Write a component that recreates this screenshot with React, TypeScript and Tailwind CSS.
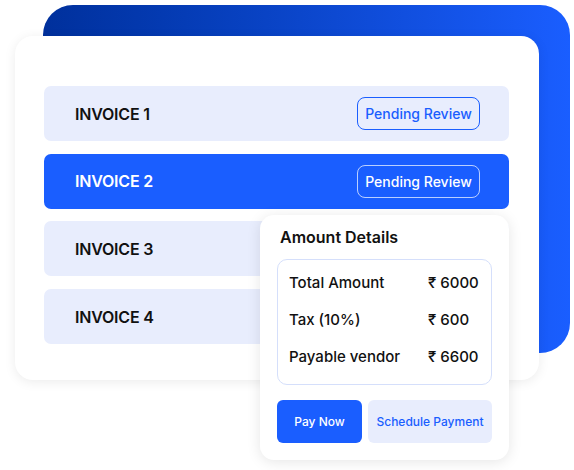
const invoices = ['INVOICE 1', 'INVOICE 2', 'INVOICE 3', 'INVOICE 4']

const amounts = [
  { label: 'Total Amount', value: '₹ 6000' },
  { label: 'Tax (10%)', value: '₹ 600' },
  { label: 'Payable vendor', value: '₹ 6600' },
]

export default function App() {
  return (
    <div className="relative w-[574px] h-[470px] bg-white overflow-hidden font-['Inter',sans-serif]">
      {/* Back card */}
      <div className="absolute left-[43px] top-[5px] w-[527px] h-[348px] rounded-[30px] bg-gradient-to-r from-[#00309c] to-[#1a5eff]" />

      {/* Invoice list card */}
      <div className="absolute left-[15px] top-[36px] w-[524px] h-[344px] rounded-[18px] bg-white shadow-[0_2px_12px_rgba(0,0,0,0.08)] pl-[29px] pr-[30px] pt-[50px]">
        <div className="flex flex-col gap-[12.7px]">
          {invoices.map((name, i) => {
            const active = i === 1
            return (
              <div
                key={name}
                className={`h-[55px] rounded-[7px] flex items-center justify-between pl-[31px] pr-[29px] ${active ? 'bg-[#1a5eff]' : 'bg-[#e8edfd]'}`}
              >
                <span className={`text-[16px] font-semibold tracking-[-0.2px] ${active ? 'text-white' : 'text-[#111]'}`}>{name}</span>
                {i < 2 && (
                  <span
                    className={`h-[33px] w-[123px] flex items-center justify-center rounded-[8px] border text-[14px] font-medium ${active ? 'border-white/70 text-white' : 'border-[#1a5eff] text-[#1a5eff]'}`}
                  >
                    Pending Review
                  </span>
                )}
              </div>
            )
          })}
        </div>
      </div>

      {/* Amount details popover */}
      <div className="absolute left-[260px] top-[215px] w-[249px] h-[245px] rounded-[14px] bg-white shadow-[0_2px_14px_rgba(0,0,0,0.1)] px-[17px] pt-[11px]">
        <div className="pl-[3px] text-[16px] font-semibold text-[#111] leading-[22px]">Amount Details</div>
        <div className="mt-[11px] h-[126px] rounded-[10px] border border-[#d5dffb] pl-[11px] pt-[12px] flex flex-col gap-[15px]">
          {amounts.map((a) => (
            <div key={a.label} className="flex items-center h-[22px] text-[15px] font-medium text-[#111]">
              <span className="w-[139px]">{a.label}</span>
              <span>{a.value}</span>
            </div>
          ))}
        </div>
        <div className="mt-[15px] flex gap-[6px]">
          <button className="h-[43px] w-[85px] rounded-[6px] bg-[#1a5eff] text-white text-[12px] font-medium">Pay Now</button>
          <button className="h-[43px] flex-1 rounded-[6px] bg-[#e8edfd] text-[#1a5eff] text-[12px] font-medium">Schedule Payment</button>
        </div>
      </div>
    </div>
  )
}
